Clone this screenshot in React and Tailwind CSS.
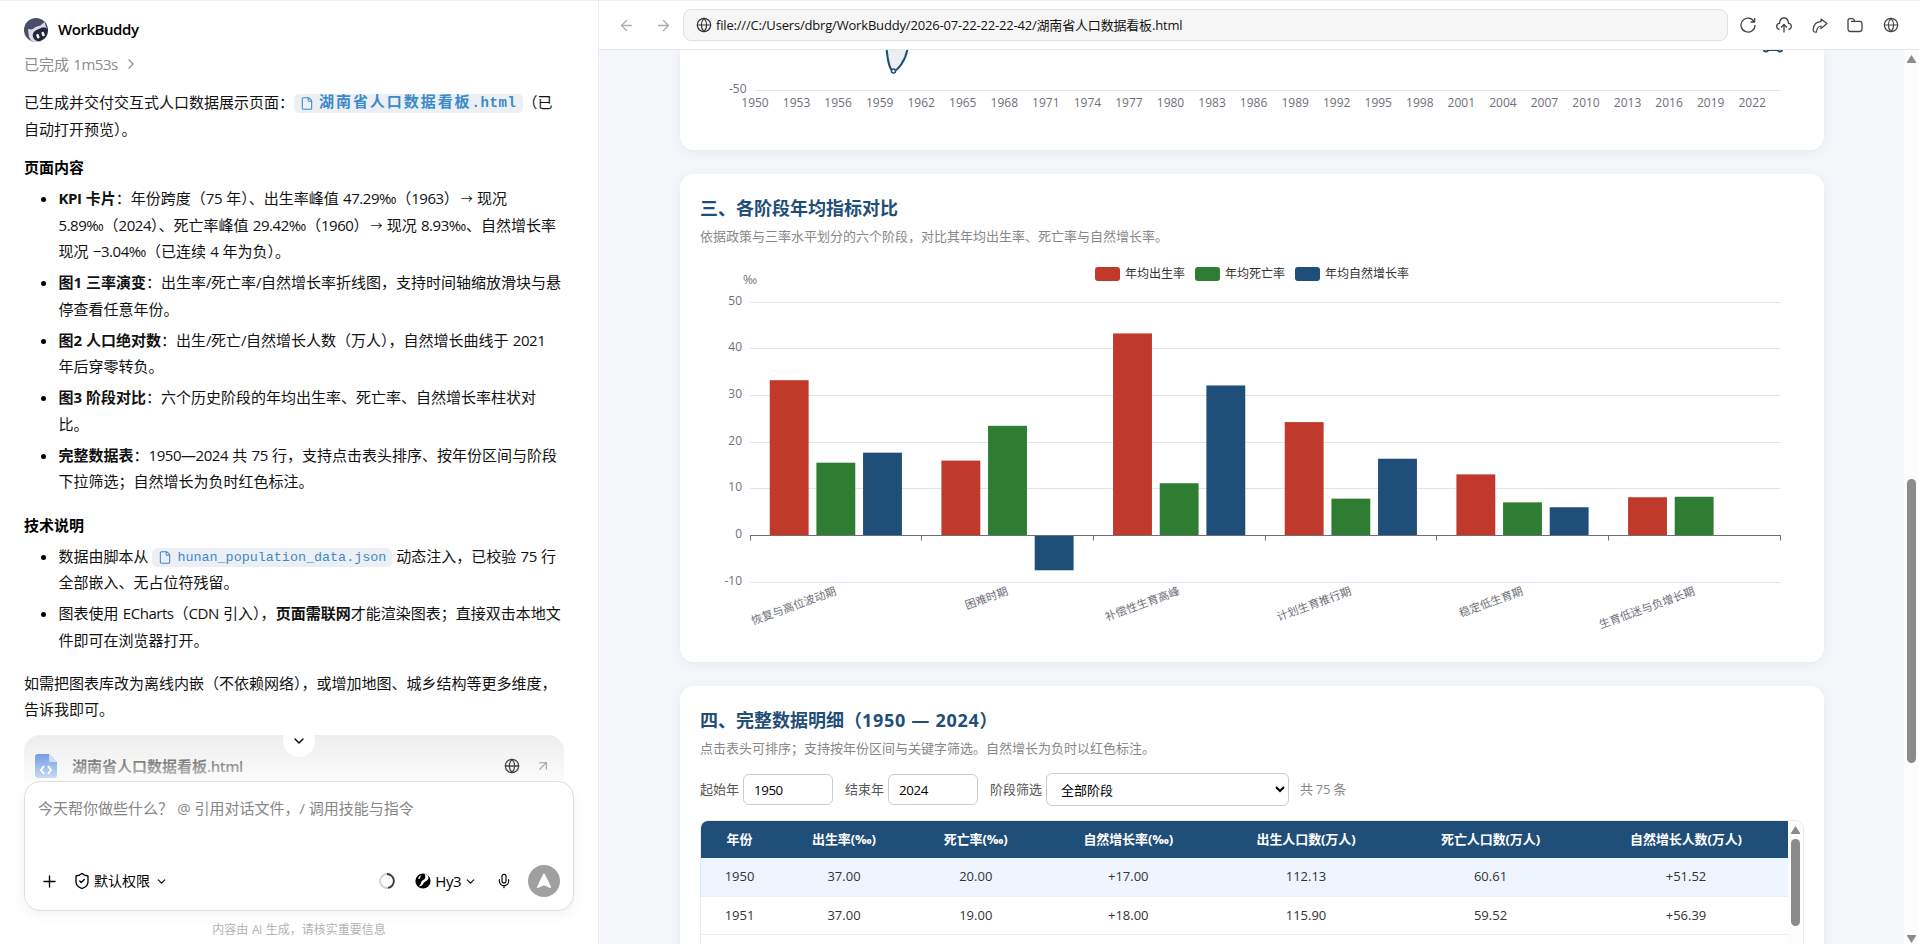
import React from 'react';
import {
    ArrowLeft,
    ArrowRight,
    ArrowUpRight,
    ChevronDown,
    ChevronRight,
    File,
    Globe,
    Mic,
    Plus,
    ShieldCheck,
} from 'lucide-react';

/** Wraps latin runs so they can be set a little tighter than the CJK text */
const Mixed = ({ children }) =>
    children.split(/([\x20-\x7e‰—−]+|→)/).map((part, i) => {
        if (i % 2 === 0) return part;
        if (part === '→') return <span key={i} className="ml-[2px] text-[12px]">→</span>;
        return <span key={i} className="tracking-[-0.03em] [word-spacing:0.8px]">{part}</span>;
    });

const FileChip = ({ name, bold = false }) => (
    <span className="inline-flex h-[19px] items-center gap-[5px] rounded-[5px] bg-[#eceff4] px-[6px] align-middle text-[#3b8ac9]">
        <File className="h-[15px] w-[14px]" strokeWidth={1.8} />
        <span
            className={
                bold
                    ? "font-['Liberation_Mono','Noto_Sans_CJK_SC',monospace] text-[14px] font-bold leading-[19px] tracking-[0.6px]"
                    : "font-['Liberation_Mono','Noto_Sans_CJK_SC',monospace] text-[13.4px] leading-[19px]"
            }
        >
            {bold ? (
                <>
                    <span className="text-[15px] tracking-[1.95px]">{name.split('.')[0]}</span>.{name.split('.')[1]}
                </>
            ) : (
                name
            )}
        </span>
    </span>
);

const Line = ({ children }) => <div className="h-[26.6px] whitespace-nowrap">{children}</div>;

const Bullet = ({ children }) => (
    <li className="flex gap-[12.5px] pl-[17px]">
        <span className="mt-[12px] h-[5px] w-[5px] shrink-0 rounded-full bg-black" />
        <div>{children}</div>
    </li>
);

const B = ({ children }) => (
    <b className="font-bold"><Mixed>{children}</Mixed></b>
);

const Avatar = () => (
    <svg className="h-6 w-6" viewBox="0 0 24 24">
        <defs>
            <clipPath id="avatar-clip"><circle cx="12" cy="12" r="12" /></clipPath>
        </defs>
        <g clipPath="url(#avatar-clip)">
            <rect width="24" height="24" fill="#4b4d6b" />
            <path d="M4 11L8 11.500Q12 8 16.500 7.500L20.500 4L22 9L24 12V24H8L5 19Z" fill="#d9dbe8" />
            <rect x="8.500" y="10.500" width="17" height="11.500" rx="5.500" fill="#23253a" transform="rotate(-24 17 16)" />
            <rect x="12.500" y="16" width="2.600" height="4.500" rx="1" fill="#f1f1f8" transform="rotate(-20 13.700 18)" />
            <rect x="17.800" y="13.800" width="2.600" height="4.500" rx="1" fill="#f1f1f8" transform="rotate(-20 19 16)" />
        </g>
    </svg>
);

const HtmlFileIcon = () => (
    <svg className="h-6 w-[22px]" viewBox="0 0 22 24">
        <path d="M3 0H14L22 8V21A3 3 0 0 1 19 24H3A3 3 0 0 1 0 21V3A3 3 0 0 1 3 0Z" fill="#2f6cd6" />
        <path d="M14 0L22 8H16A2 2 0 0 1 14 6Z" fill="#a9c6f7" />
        <path d="M9 12L6 16L9 20M13 12L16 16L13 20" fill="none" stroke="#fff" strokeWidth="2" />
    </svg>
);

const HyLogo = () => (
    <svg className="h-4 w-4" viewBox="0 0 16 16">
        <circle cx="8" cy="8" r="7.600" fill="#000" />
        <path d="M9.500 1C12.500 1 14.500 4 13 6.500C11.800 8.500 9.500 8 8.600 10C7.800 12 6.500 13.800 3 13.200C5.800 12.600 5.600 10.800 6.200 9.200C7 7 9.600 7.200 10.200 4.800C10.500 3.200 10 2 9.500 1Z" fill="#fff" />
        <path d="M3 5.500Q4 2.800 6.500 2.200Q5.200 3.600 5 5.500Q4 6 3 5.500Z" fill="#fff" />
    </svg>
);

const ChatPanel = () => (
    <aside className="flex h-full w-[599px] shrink-0 flex-col border-r border-[#ececec] bg-white pl-6 text-[15px] leading-[26.6px] text-[#111]">
        <div className="mt-[17px] flex h-6 items-center gap-[10px]">
            <Avatar />
            <span className="pb-[2px] text-[15px] font-semibold tracking-[-0.45px] text-black">WorkBuddy</span>
        </div>
        <div className="mt-[10px] flex h-6 items-center gap-[5px] text-[#8c8c8c]">
            <span><Mixed>已完成 1m53s</Mixed></span>
            <ChevronRight className="h-4 w-4" strokeWidth={1.8} />
        </div>

        <div className="mt-[13px]">
            <Line>
                已生成并交付交互式人口数据展示页面：
                <FileChip name="湖南省人口数据看板.html" bold />
                （已
            </Line>
            <Line>自动打开预览）。</Line>
        </div>

        <h3 className="mt-[11.5px] font-bold text-black">页面内容</h3>
        <ul className="mt-[5px] flex flex-col gap-[4.3px]">
            <Bullet>
                <Line><B>KPI 卡片</B><Mixed>：年份跨度（75 年）、出生率峰值 47.29‰（1963）→ 现况</Mixed></Line>
                <Line><Mixed>5.89‰（2024）、死亡率峰值 29.42‰（1960）→ 现况 8.93‰、自然增长率</Mixed></Line>
                <Line><Mixed>现况 −3.04‰（已连续 4 年为负）。</Mixed></Line>
            </Bullet>
            <Bullet>
                <Line><B>图1 三率演变</B><Mixed>：出生率/死亡率/自然增长率折线图，支持时间轴缩放滑块与悬</Mixed></Line>
                <Line>停查看任意年份。</Line>
            </Bullet>
            <Bullet>
                <Line><B>图2 人口绝对数</B><Mixed>：出生/死亡/自然增长人数（万人），自然增长曲线于 2021</Mixed></Line>
                <Line>年后穿零转负。</Line>
            </Bullet>
            <Bullet>
                <Line><B>图3 阶段对比</B><Mixed>：六个历史阶段的年均出生率、死亡率、自然增长率柱状对</Mixed></Line>
                <Line>比。</Line>
            </Bullet>
            <Bullet>
                <Line><B>完整数据表</B><Mixed>：1950—2024 共 75 行，支持点击表头排序、按年份区间与阶段</Mixed></Line>
                <Line>下拉筛选；自然增长为负时红色标注。</Line>
            </Bullet>
        </ul>

        <h3 className="mt-[17px] font-bold text-black">技术说明</h3>
        <ul className="mt-[4px] flex flex-col gap-[4.3px]">
            <Bullet>
                <Line>
                    数据由脚本从 <FileChip name="hunan_population_data.json" /> <Mixed>动态注入，已校验 75 行</Mixed>
                </Line>
                <Line>全部嵌入、无占位符残留。</Line>
            </Bullet>
            <Bullet>
                <Line><Mixed>图表使用 ECharts（CDN 引入），</Mixed><B>页面需联网</B>才能渲染图表；直接双击本地文</Line>
                <Line>件即可在浏览器打开。</Line>
            </Bullet>
        </ul>

        <div className="mt-[16.5px]">
            <Line>如需把图表库改为离线内嵌（不依赖网络），或增加地图、城乡结构等更多维度，</Line>
            <Line>告诉我即可。</Line>
        </div>

        {/* Generated file card, fading out behind the composer */}
        <div className="relative mt-auto h-[46px] w-[540px] shrink-0 overflow-hidden rounded-t-[16px] bg-[#eeeeee]">
            <div className="flex items-center pl-[11px] pt-[17px]">
                <HtmlFileIcon />
                <span className="ml-[15px] flex-1 text-[15px] font-semibold leading-7 text-[#111]"><Mixed>湖南省人口数据看板.html</Mixed></span>
                <Globe className="relative z-10 h-4 w-4 text-[#444]" strokeWidth={1.9} />
                <ArrowUpRight className="relative z-10 ml-[15px] mr-[13px] h-4 w-4 text-[#a0a0a0]" strokeWidth={1.6} />
            </div>
            <div className="absolute inset-0 bg-gradient-to-b from-white/0 to-white/80" />
            <div className="absolute left-[259px] top-[-10px] z-10 flex h-8 w-8 items-center justify-center rounded-full bg-white">
                <ChevronDown className="h-4 w-4 text-black" strokeWidth={2} />
            </div>
        </div>

        <div className="flex h-[130px] w-[550px] shrink-0 flex-col justify-between rounded-[16px] border border-[#dedede] bg-white shadow-[0_4px_12px_rgba(0,0,0,0.05)]">
            <div className="pl-[13px] pt-[13px] text-[#868686]"><Mixed>今天帮你做些什么？  @ 引用对话文件，/ 调用技能与指令</Mixed></div>
            <div className="mb-[13px] flex h-8 items-center pl-[15px] pr-[13px] text-[14px] text-black">
                <Plus className="h-[19px] w-[19px]" strokeWidth={1.7} />
                <ShieldCheck className="ml-[14px] h-[18px] w-[18px]" strokeWidth={1.8} />
                <span className="ml-[3px]">默认权限</span>
                <ChevronDown className="ml-[5px] h-[13px] w-[13px]" strokeWidth={2} />
                <svg className="ml-auto h-4 w-4" viewBox="0 0 16 16" fill="none" strokeWidth="1.800">
                    <circle cx="8" cy="8" r="7" stroke="#cfcfcf" />
                    <path d="M8 1A7 7 0 0 1 9 14.900" stroke="#3a3a3a" />
                </svg>
                <span className="ml-[20px]"><HyLogo /></span>
                <span className="ml-[4px] text-[15px] tracking-[-0.5px]">Hy3</span>
                <ChevronDown className="ml-[3px] h-[13px] w-[13px]" strokeWidth={2} />
                <Mic className="ml-[19px] h-4 w-4" strokeWidth={1.7} />
                <span className="ml-[16px] flex h-8 w-8 items-center justify-center rounded-full bg-[#a0a0a0]">
                    <svg className="h-4 w-4" viewBox="0 0 16 16" fill="#fff">
                        <path d="M7.200 1Q8 -0.200 8.800 1L15 13.800Q15.400 15.200 14 15L8 12.200L2 15Q0.600 15.200 1 13.800Z" />
                    </svg>
                </span>
            </div>
        </div>
        <div className="h-[33px] w-[550px] shrink-0 text-center text-[12px] leading-[38px] text-[#b4b4b4]">
            <Mixed>内容由 AI 生成，请核实重要信息</Mixed>
        </div>
    </aside>
);

const Toolbar = () => (
    <div className="flex h-[49px] shrink-0 items-center border-b border-[#e6e6e6] bg-white pl-[19px] pr-[20px]">
        <ArrowLeft className="h-[17px] w-[17px] text-[#adadad]" strokeWidth={1.8} />
        <ArrowRight className="ml-[20px] h-[17px] w-[17px] text-[#adadad]" strokeWidth={1.8} />
        <div className="ml-[11px] flex h-8 w-[1045px] items-center gap-[4px] rounded-[8px] border border-[#e1e1e1] bg-[#f6f6f6] pl-[12px] text-[13px] text-[#111]">
            <Globe className="h-4 w-4 text-[#333]" strokeWidth={1.8} />
            <span className="pt-[2px] tracking-[-0.18px]">
                file:///C:/Users/dbrg/WorkBuddy/2026-07-22-22-22-42/湖南省人口数据看板.html
            </span>
        </div>
        <div className="flex flex-1 items-center justify-between pl-[12px] text-[#444]">
            <svg className="h-4 w-4" viewBox="0 0 16 16" fill="none" stroke="currentColor" strokeWidth="1.300">
                <path d="M14 4.500A7 7 0 1 0 15 8M14.600 1V5H10.600" />
            </svg>
            <svg className="h-4 w-4" viewBox="0 0 16 16" fill="none" stroke="currentColor" strokeWidth="1.300">
                <path d="M3.500 12.500C-0.500 11.500 0 6.500 3.500 6.300C4 -0.800 12 -0.800 12.500 6.300C16 6.500 16.500 11.500 12.500 12.500M8 15.500V8M5 10.500L8 7.500L11 10.500" />
            </svg>
            <svg className="h-4 w-4" viewBox="0 0 16 16" fill="none" stroke="currentColor" strokeWidth="1.200" strokeLinejoin="round">
                <path d="M9 2L15 6.500L9 11.500V9C6 9 5 11 4.300 15.200L2.500 15C1.500 15 1 13.500 1.200 12C1.800 7 5 4.700 9 4.600Z" />
            </svg>
            <svg className="h-4 w-4" viewBox="0 0 16 16" fill="none" stroke="currentColor" strokeWidth="1.300">
                <path d="M1 11.500V3.500Q1 1.700 3 1.700H5.500Q6.500 1.700 7.200 3L7.800 4.300H12.500Q15 4.300 15 7V12Q15 14.500 12.500 14.500H3.500Q1 14.500 1 11.500ZM4 4.300H8" />
            </svg>
            <Globe className="h-4 w-4" strokeWidth={1.8} />
        </div>
    </div>
);

const YEARS = Array.from({ length: 25 }, (_, i) => 1950 + i * 3);

/** Bottom part of the population chart, the rest is scrolled out of view */
const PopulationChart = () => (
    <svg className="block h-[100px] w-[1144px] text-[12px]" viewBox="680 50 1144 100">
        <line x1="755" x2="1780" y1="90.500" y2="90.500" stroke="#dfe4f0" />
        <path d="M886.500 48C887.500 60 890 71 893.500 71C897 71 906 61 907.500 48Z" fill="#ebeff2" />
        <path d="M886.500 48C887.500 60 890 71 893.500 71C897 71 906 61 907.500 48" fill="none" stroke="#1f4e79" strokeWidth="2" />
        <circle cx="893.500" cy="71" r="2" fill="#fff" stroke="#1f4e79" strokeWidth="1.600" />
        <path d="M1766 50.500H1780" stroke="#1f4e79" strokeWidth="1" />
        <circle cx="1766" cy="49.500" r="2" fill="#fff" stroke="#1f4e79" strokeWidth="2" />
        <circle cx="1780" cy="49.500" r="2" fill="#fff" stroke="#1f4e79" strokeWidth="2" />
        <text x="746.500" y="93" textAnchor="end" fill="#6e7079">-50</text>
        {YEARS.map((year, i) => (
            <text key={year} x={755 + i * 41.55} y="107" textAnchor="middle" fill="#6e7079">{year}</text>
        ))}
    </svg>
);

const SERIES = [
    { name: '年均出生率', color: '#c0392b', x: 1095 },
    { name: '年均死亡率', color: '#2e7d32', x: 1195 },
    { name: '年均自然增长率', color: '#1f4e79', x: 1295 },
];

const STAGES = [
    { name: '恢复与高位波动期', values: [33.28, 15.6, 17.75] },
    { name: '困难时期', values: [16.05, 23.5, -7.45] },
    { name: '补偿性生育高峰', values: [43.3, 11.2, 32.15] },
    { name: '计划生育推行期', values: [24.3, 7.9, 16.45] },
    { name: '稳定低生育期', values: [13.1, 7.1, 6.05] },
    { name: '生育低迷与负增长期', values: [8.2, 8.3, -0.1] },
];

const GRID = [
    [50, 302.5],
    [40, 348.5],
    [30, 395.5],
    [20, 442.5],
    [10, 488.5],
    [0, 535.5],
    [-10, 582.5],
];

const BAND = 1030 / 6;
const BAR = 38.88;

const StageChart = () => (
    <svg className="mt-[2px] block h-[400px] w-[1104px] text-[12px]" viewBox="700 252 1104 400">
        {SERIES.map((s) => (
            <g key={s.name}>
                <rect x={s.x} y="267" width="25" height="14" rx="3" fill={s.color} />
                <text x={s.x + 30} y="277.500" fill="#333">{s.name}</text>
            </g>
        ))}
        <text x="750" y="284" textAnchor="middle" fill="#6e7079">‰</text>
        {GRID.map(([value, y]) => (
            <g key={value}>
                {value !== 0 && <line x1="750" x2="1780" y1={y} y2={y} stroke="#dfe4f0" />}
                <text x="742" y={y + 2.5} textAnchor="end" fill="#6e7079">{value}</text>
            </g>
        ))}
        {STAGES.map((stage, i) => {
            const start = 750 + i * BAND;
            const center = start + BAND / 2;
            return (
                <g key={stage.name}>
                    {stage.values.map((v, k) => (
                        <rect
                            key={k}
                            x={center - BAR * 1.7 + k * BAR * 1.2}
                            y={v > 0 ? 535.5 - v * 4.6667 : 535.5}
                            width={BAR}
                            height={Math.abs(v) * 4.6667}
                            fill={SERIES[k].color}
                        />
                    ))}
                    <text
                        x={center}
                        y="594.500"
                        textAnchor="end"
                        fill="#6e7079"
                        className="text-[11.2px]"
                        transform={`rotate(-20 ${center} 590.7)`}
                    >
                        {stage.name}
                    </text>
                </g>
            );
        })}
        <line x1="750" x2="1781" y1="535.500" y2="535.500" stroke="#6e7079" />
        {[0, 1, 2, 3, 4, 5, 6].map((i) => {
            const x = Math.floor(750 + i * BAND) + 0.5;
            return <line key={i} x1={x} x2={x} y1="535" y2="540.500" stroke="#6e7079" />;
        })}
    </svg>
);

const COLUMNS = ['年份', '出生率(‰)', '死亡率(‰)', '自然增长率(‰)', '出生人口数(万人)', '死亡人口数(万人)', '自然增长人数(万人)'];

const ROWS = [
    ['1950', '37.00', '20.00', '+17.00', '112.13', '60.61', '+51.52'],
    ['1951', '37.00', '19.00', '+18.00', '115.90', '59.52', '+56.39'],
];

const TABLE_GRID = 'grid grid-cols-[77px_132px_131.5px_173.5px_182px_187px_204px] items-center text-center';

const DataTable = () => (
    <div className="flex h-[300px] overflow-hidden rounded-[8px] border border-[#e8eaee]">
        <div className="w-[1088px]">
            <div className={`${TABLE_GRID} h-[37px] bg-[#1f4e79] text-[13px] font-bold text-white`}>
                {COLUMNS.map((c) => <span key={c} className="tracking-[-0.1px]">{c}</span>)}
            </div>
            {ROWS.map((row, i) => (
                <div
                    key={row[0]}
                    className={`${TABLE_GRID} border-b border-[#ebecef] text-[13px] text-[#333] ${i === 0 ? 'h-[39px] bg-[#eef5ff]' : 'h-[38px] bg-white'}`}
                >
                    {row.map((cell, k) => <span key={k}>{cell}</span>)}
                </div>
            ))}
        </div>
        <div className="flex w-[15px] shrink-0 flex-col items-center bg-[#fcfcfc] pt-[5px]">
            <svg className="h-[8px] w-[9px]" viewBox="0 0 9 8"><path d="M4.500 0L9 7V8H0V7Z" fill="#8b8b8b" /></svg>
            <div className="mt-[5px] h-[87px] w-[9px] rounded-full bg-[#8b8b8b]" />
        </div>
    </div>
);

const Filters = () => (
    <div className="flex h-[33px] items-center text-[13px] text-[#555]">
        <span>起始年</span>
        <input className="ml-[4px] h-[31px] w-[90px] rounded-[6px] border border-[#ccc] pl-[10px] text-[13.3px] tracking-[-0.4px] text-black" defaultValue="1950" />
        <span className="ml-[12px]">结束年</span>
        <input className="ml-[4px] h-[31px] w-[90px] rounded-[6px] border border-[#ccc] pl-[10px] text-[13.3px] tracking-[-0.4px] text-black" defaultValue="2024" />
        <span className="ml-[12px]">阶段筛选</span>
        <select className="ml-[4px] h-[33px] w-[243px] rounded-[6px] border border-[#ccc] bg-white pl-[10px] text-[13px] text-black">
            <option>全部阶段</option>
        </select>
        <span className="ml-[11px] tracking-[-0.3px] text-[#888]">共 75 条</span>
    </div>
);

const CARD_SHADOW = 'shadow-[0_2px_12px_rgba(31,78,121,0.07)]';

const SectionHead = ({ title, sub }) => (
    <>
        <h2 className="h-[28px] text-[18px] font-bold leading-[28px] text-[#1f4e79]">{title}</h2>
        <p className="h-[28px] text-[13px] leading-[28px] text-[#888]">{sub}</p>
    </>
);

const Dashboard = () => (
    <div className="flex min-h-0 flex-1 bg-[#f4f6fa]">
        <div className="flex min-w-0 flex-1 flex-col gap-6 overflow-hidden pl-[81px]">
            <section className={`h-[100px] w-[1144px] shrink-0 rounded-b-[14px] bg-white ${CARD_SHADOW}`}>
                <PopulationChart />
            </section>
            <section className={`h-[488px] w-[1144px] shrink-0 rounded-[14px] bg-white px-5 pt-5 ${CARD_SHADOW}`}>
                <SectionHead title="三、各阶段年均指标对比" sub="依据政策与三率水平划分的六个阶段，对比其年均出生率、死亡率与自然增长率。" />
                <StageChart />
            </section>
            <section className={`h-[400px] w-[1144px] shrink-0 rounded-[14px] bg-white px-5 pt-5 ${CARD_SHADOW}`}>
                <SectionHead
                    title={<>四、完整数据明细（<span className="tracking-[0.7px]">1950 — 2024</span>）</>}
                    sub="点击表头可排序；支持按年份区间与关键字筛选。自然增长为负时以红色标注。"
                />
                <div className="mb-[14px] mt-[11px]"><Filters /></div>
                <DataTable />
            </section>
        </div>
        {/* Page scrollbar */}
        <div className="flex w-[15px] shrink-0 flex-col items-center bg-[#fcfcfc] pb-[1px] pt-[5px]">
            <svg className="h-[8px] w-[9px]" viewBox="0 0 9 8"><path d="M4.500 0L9 7V8H0V7Z" fill="#8b8b8b" /></svg>
            <div className="mt-[416px] h-[284px] w-[9px] rounded-full bg-[#8b8b8b]" />
            <svg className="mt-auto h-[8px] w-[9px]" viewBox="0 0 9 8"><path d="M4.500 8L9 1V0H0V1Z" fill="#8b8b8b" /></svg>
        </div>
    </div>
);

export default function App() {
    return (
        <div className="flex h-[944px] w-[1919px] overflow-hidden border-t border-[#efefef] bg-white font-['Open_Sans','Noto_Sans_CJK_SC',sans-serif]">
            <ChatPanel />
            <main className="flex min-w-0 flex-1 flex-col">
                <Toolbar />
                <Dashboard />
            </main>
        </div>
    );
}
